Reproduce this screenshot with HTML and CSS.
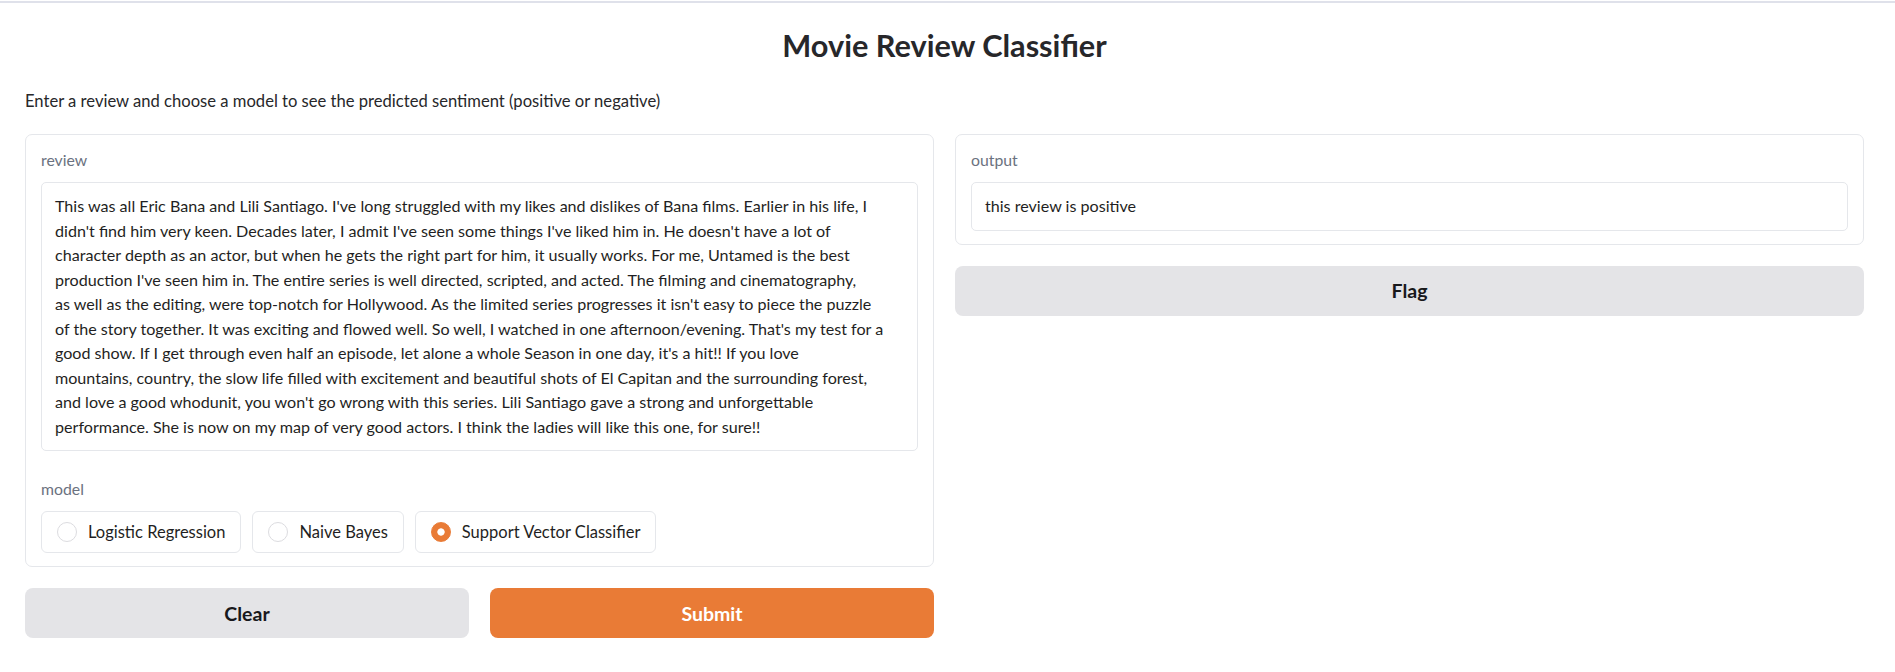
FILE: index.html
```html
<!DOCTYPE html>
<html lang="en">
<head>
<meta charset="utf-8">
<title>Movie Review Classifier</title>
<link rel="stylesheet" href="styles.css">
</head>
<body>
<div class="topline"></div>
<main class="app">
  <h1 class="title">Movie Review Classifier</h1>
  <p class="desc">Enter a review and choose a model to see the predicted sentiment (positive or negative)</p>
  <div class="columns">
    <div class="col">
      <div class="panel panel-left">
        <label class="label" for="review">review</label>
        <textarea id="review" class="textbox review" wrap="off" readonly>This was all Eric Bana and Lili Santiago. I've long struggled with my likes and dislikes of Bana films. Earlier in his life, I
didn't find him very keen. Decades later, I admit I've seen some things I've liked him in. He doesn't have a lot of
character depth as an actor, but when he gets the right part for him, it usually works. For me, Untamed is the best
production I've seen him in. The entire series is well directed, scripted, and acted. The filming and cinematography,
as well as the editing, were top-notch for Hollywood. As the limited series progresses it isn't easy to piece the puzzle
of the story together. It was exciting and flowed well. So well, I watched in one afternoon/evening. That's my test for a
good show. If I get through even half an episode, let alone a whole Season in one day, it's a hit!! If you love
mountains, country, the slow life filled with excitement and beautiful shots of El Capitan and the surrounding forest,
and love a good whodunit, you won't go wrong with this series. Lili Santiago gave a strong and unforgettable
performance. She is now on my map of very good actors. I think the ladies will like this one, for sure!!</textarea>
        <div class="label model-label">model</div>
        <div class="radios">
          <label class="radio"><span class="dot"></span><span>Logistic Regression</span></label>
          <label class="radio"><span class="dot"></span><span>Naive Bayes</span></label>
          <label class="radio"><span class="dot checked"></span><span>Support Vector Classifier</span></label>
        </div>
      </div>
      <div class="btnrow">
        <button class="btn secondary">Clear</button>
        <button class="btn primary">Submit</button>
      </div>
    </div>
    <div class="col">
      <div class="panel panel-right">
        <div class="label">output</div>
        <div class="textbox output">this review is positive</div>
      </div>
      <button class="btn secondary">Flag</button>
    </div>
  </div>
</main>
</body>
</html>
```
FILE: styles.css
```css
* { box-sizing: border-box; }
html, body { margin: 0; padding: 0; background: #fff; }
body {
  font-family: "Lato", "Liberation Sans", sans-serif;
  color: #1f2937;
}
.topline {
  height: 2px;
  margin-top: 1px;
  background: #dfe1ea;
}
.app {
  padding: 0 31px 0 25px;
}
.title {
  margin: 0;
  padding-top: 26px;
  height: 64px;
  line-height: 34px;
  text-align: center;
  font-size: 30.7px;
  font-weight: 700;
  color: #27272a;
}
.desc {
  margin: 0;
  height: 67px;
  padding-top: 22px;
  line-height: 24px;
  font-size: 16.6px;
  color: #27272a;
}
.columns {
  display: grid;
  grid-template-columns: 1fr 1fr;
  column-gap: 21px;
  align-items: start;
}
.col {
  display: flex;
  flex-direction: column;
  gap: 21px;
}
.panel {
  border: 1px solid #e5e7eb;
  border-radius: 7px;
  padding: 14px 15px 13px;
  background: #fff;
}
.label {
  display: block;
  height: 22px;
  line-height: 22px;
  margin-bottom: 11px;
  font-size: 15.8px;
  color: #6b7280;
}
.model-label {
  margin-top: 27px;
}
.textbox {
  display: block;
  width: 100%;
  border: 1px solid #e5e7eb;
  border-radius: 5px;
  padding: 11px 13px;
  font-family: inherit;
  font-size: 16.1px;
  line-height: 24.5px;
  color: #1f1f23;
  background: #fff;
}
.review {
  height: 269px;
  resize: none;
  overflow: hidden;
  white-space: pre;
  outline: none;
}
.radios {
  display: flex;
  gap: 11px;
}
.radio {
  display: flex;
  align-items: center;
  gap: 11px;
  height: 42px;
  padding: 0 15px;
  border: 1px solid #e5e7eb;
  border-radius: 6px;
  font-size: 16.5px;
  color: #1f1f23;
}
.dot {
  width: 20px;
  height: 20px;
  border-radius: 50%;
  border: 1px solid #dcdce0;
  background: #fff;
  flex: none;
}
.dot.checked {
  border-color: #e97b36;
  background: radial-gradient(circle, #fff 0 3.3px, #e97b36 4px);
}
.btnrow {
  display: grid;
  grid-template-columns: 1fr 1fr;
  gap: 21px;
}
.btn {
  height: 50px;
  border: none;
  border-radius: 8px;
  font-family: inherit;
  font-size: 19.5px;
  font-weight: 700;
  cursor: pointer;
}
.secondary {
  background: #e4e4e7;
  color: #18181b;
}
.primary {
  background: #e97b36;
  color: #fff;
}
```
